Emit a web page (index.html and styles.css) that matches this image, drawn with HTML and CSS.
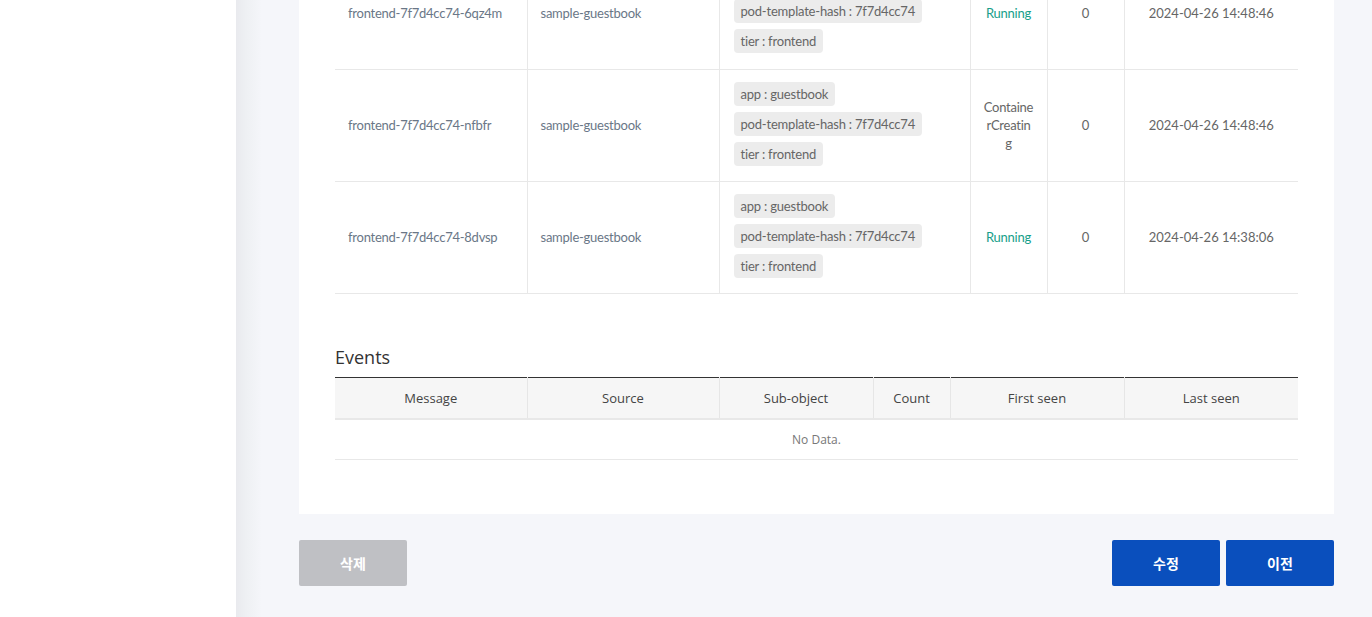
FILE: index.html
```html
<!DOCTYPE html>
<html lang="ko">
<head>
<meta charset="utf-8">
<title>Pod detail</title>
<link rel="stylesheet" href="styles.css">
</head>
<body>
<div class="layout">
  <aside class="sidebar"></aside>
  <main class="main">
    <div class="content">
      <section class="card">
        <table class="pods">
          <colgroup>
            <col class="c-name"><col class="c-ns"><col class="c-labels"><col class="c-status"><col class="c-restart"><col class="c-date">
          </colgroup>
          <tbody>
            <tr>
              <td class="link">frontend-7f7d4cc74-6qz4m</td>
              <td class="link">sample-guestbook</td>
              <td class="labels">
                <div class="badges">
                  <span class="badge">app : guestbook</span>
                  <span class="badge">pod-template-hash : 7f7d4cc74</span>
                  <span class="badge">tier : frontend</span>
                </div>
              </td>
              <td class="center running">Running</td>
              <td class="center">0</td>
              <td class="center date">2024-04-26 14:48:46</td>
            </tr>
            <tr>
              <td class="link">frontend-7f7d4cc74-nfbfr</td>
              <td class="link">sample-guestbook</td>
              <td class="labels">
                <div class="badges">
                  <span class="badge">app : guestbook</span>
                  <span class="badge">pod-template-hash : 7f7d4cc74</span>
                  <span class="badge">tier : frontend</span>
                </div>
              </td>
              <td class="center status-wrap">ContainerCreating</td>
              <td class="center">0</td>
              <td class="center date">2024-04-26 14:48:46</td>
            </tr>
            <tr>
              <td class="link">frontend-7f7d4cc74-8dvsp</td>
              <td class="link">sample-guestbook</td>
              <td class="labels">
                <div class="badges">
                  <span class="badge">app : guestbook</span>
                  <span class="badge">pod-template-hash : 7f7d4cc74</span>
                  <span class="badge">tier : frontend</span>
                </div>
              </td>
              <td class="center running">Running</td>
              <td class="center">0</td>
              <td class="center date">2024-04-26 14:38:06</td>
            </tr>
          </tbody>
        </table>

        <h3 class="section-title">Events</h3>
        <table class="events">
          <colgroup>
            <col class="e-msg"><col class="e-src"><col class="e-sub"><col class="e-count"><col class="e-first"><col class="e-last">
          </colgroup>
          <thead>
            <tr>
              <th>Message</th><th>Source</th><th>Sub-object</th><th>Count</th><th>First seen</th><th>Last seen</th>
            </tr>
          </thead>
          <tbody>
            <tr><td colspan="6" class="nodata">No Data.</td></tr>
          </tbody>
        </table>
      </section>

      <div class="actions">
        <button class="btn btn-gray">삭제</button>
        <div class="actions-right">
          <button class="btn btn-blue">수정</button>
          <button class="btn btn-blue">이전</button>
        </div>
      </div>
    </div>
  </main>
</div>
</body>
</html>
```
FILE: styles.css
```css
html, body {
  margin: 0;
  padding: 0;
  height: 100%;
  overflow: hidden;
}
body {
  font-family: "Lato", "Noto Sans CJK KR", sans-serif;
  color: #555;
  background: #fff;
}
.layout {
  display: flex;
  height: 617px;
  overflow: hidden;
}
.sidebar {
  width: 236px;
  flex: 0 0 236px;
  background: #fff;
}
.main {
  flex: 1;
  background: linear-gradient(to right, #e9eaee 0, #eef0f3 10px, #f5f6fa 26px) no-repeat, #f5f6fa;
  padding: 0 38px 0 63px;
}
.content {
  margin-top: -43px;
}
.card {
  background: #fff;
  padding: 0 36px 54px;
}
table {
  border-collapse: collapse;
  width: 963px;
  table-layout: fixed;
}
.c-name { width: 192px; }
.c-ns { width: 192px; }
.c-labels { width: 251px; }
.c-status { width: 77px; }
.c-restart { width: 77px; }
.c-date { width: 174px; }

.pods td {
  font-size: 13px;
  letter-spacing: -0.25px;
  color: #666;
  border-bottom: 1px solid #e8e8e8;
  border-left: 1px solid #e8e8e8;
  padding: 0 13px;
  height: 112px;
  box-sizing: border-box;
  vertical-align: middle;
}
.pods td:first-child { border-left: none; }
.pods td.link { color: #6a7787; }
.pods td.center { text-align: center; padding: 0 6px; }
.pods td.date { letter-spacing: 0; }
.pods td.running { color: #17a08a; }
.pods td.status-wrap {
  word-break: break-all;
  line-height: 18px;
  padding: 0 13px;
}
.pods td.labels {
  padding: 12px 14px 15px;
}
.badges {
  display: flex;
  flex-direction: column;
  align-items: flex-start;
  gap: 6px;
}
.badge {
  display: block;
  background: #ececec;
  border-radius: 4px;
  padding: 0 7px;
  height: 24px;
  line-height: 24px;
  color: #666;
  font-size: 13px;
  letter-spacing: -0.2px;
}

.section-title {
  font-family: "Open Sans", "Noto Sans CJK KR", sans-serif;
  font-weight: 400;
  font-size: 18px;
  line-height: 26px;
  color: #333;
  margin: 50px 0 7px;
}
.e-msg { width: 192px; }
.e-src { width: 192px; }
.e-sub { width: 154px; }
.e-count { width: 77px; }
.e-first { width: 174px; }
.e-last { width: 174px; }
.events {
  border-top: 1px solid #333;
}
.events th {
  font-family: "Open Sans", "Noto Sans CJK KR", sans-serif;
  font-weight: 400;
  font-size: 13px;
  color: #444;
  background: #f6f6f6;
  height: 40px;
  padding: 0;
  border-left: 1px solid #e6e6e6;
  border-bottom: 2px solid #e8e8e8;
}
.events th:first-child { border-left: none; }
.events td.nodata {
  font-family: "Open Sans", "Noto Sans CJK KR", sans-serif;
  font-size: 12px;
  color: #777;
  text-align: center;
  height: 39px;
  padding: 0;
  border-bottom: 1px solid #e8e8e8;
}

.actions {
  display: flex;
  justify-content: space-between;
  margin-top: 26px;
}
.actions-right {
  display: flex;
  gap: 6px;
}
.btn {
  width: 108px;
  height: 46px;
  border: none;
  border-radius: 2px;
  color: #fff;
  font-family: "Noto Sans CJK KR", sans-serif;
  font-weight: 700;
  font-size: 14px;
  cursor: pointer;
}
.btn-gray { background: #bfc0c4; }
.btn-blue { background: #0a4fbd; }
```
